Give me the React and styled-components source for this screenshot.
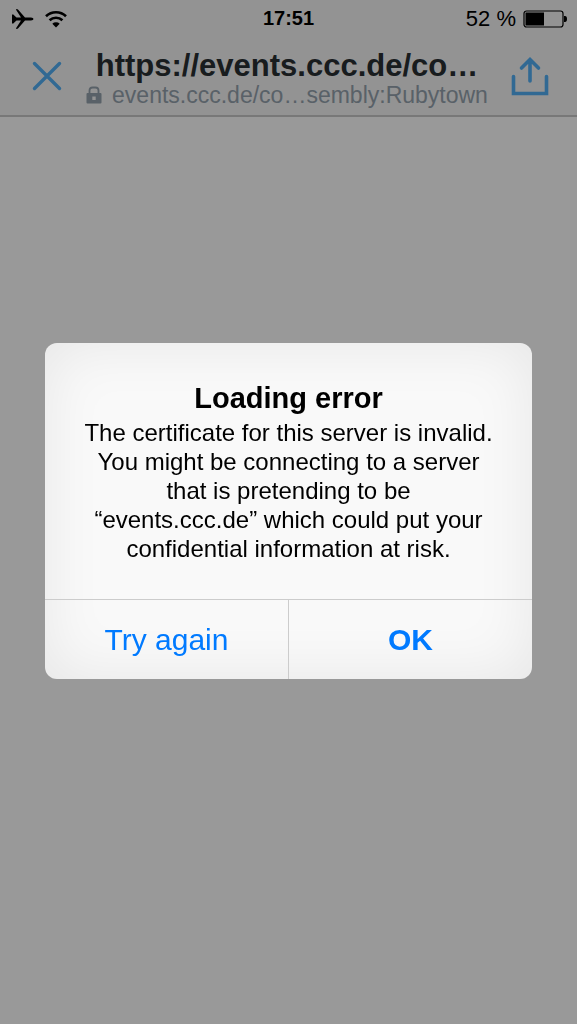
import React, { useState } from 'react';
import styled, { createGlobalStyle } from 'styled-components';


const GlobalStyle = createGlobalStyle`
    * {
        box-sizing: border-box;
    }

    body {
        margin: 0;
        background-color: #ffffff;
        color: #000000;
        font-family: "Liberation Sans", Arial, sans-serif;
    }

    h1, h2, p {
        margin: 0;
    }
`;

const Page = styled.div`
    min-height: 100vh;
`;

const TopBar = styled.header`
    background-color: #f5f5f5;
    border-bottom: 2px solid #c8c8c8;
`;

const StatusBar = styled.div`
    display: grid;
    grid-template-columns: 1fr auto 1fr;
    align-items: center;
    height: 37px;
    padding: 0 10px;
    font-size: 22px;
`;

const StatusGroup = styled.div`
    display: flex;
    align-items: center;
    justify-content: ${props => props.end ? 'flex-end' : 'flex-start'};
    gap: ${props => props.end ? 7 : 11}px;
`;

const Clock = styled.time`
    font-size: 20px;
    font-weight: bold;
`;

const NavBar = styled.nav`
    display: flex;
    align-items: center;
    justify-content: space-between;
    height: 78px;
    padding: 0 27px 0 30px;
`;

const IconButton = styled.button`
    display: flex;
    padding: 0;
    border: none;
    background: none;
    color: #52b0f5;
    cursor: pointer;
`;

const Address = styled.div`
    display: flex;
    flex-direction: column;
    align-items: center;
    padding-top: 6px;
    white-space: nowrap;
`;

const PageTitle = styled.h1`
    color: #292f33;
    font-size: 31px;
    line-height: 32px;
`;

const PageUrl = styled.p`
    display: flex;
    align-items: center;
    gap: 10px;
    color: #94a2ad;
    font-size: 23px;
    line-height: 26px;
`;

const Overlay = styled.div`
    position: fixed;
    inset: 0;
    display: flex;
    align-items: center;
    justify-content: center;
    padding: 0 45px 2px;
    background-color: rgba(0, 0, 0, 0.4);
`;

const Alert = styled.section`
    flex: 1;
    max-width: 540px;
    overflow: hidden;
    border-radius: 12px;
    background-color: #f9f9f9;
    box-shadow: inset 0 0 60px rgba(0, 0, 0, 0.08);
    text-align: center;
`;

const AlertBody = styled.div`
    padding: 37px 38px 36px;
`;

const AlertTitle = styled.h2`
    margin-bottom: 2px;
    font-size: 29px;
    line-height: 36px;
`;

const AlertMessage = styled.p`
    font-size: 24px;
    line-height: 29px;
`;

const AlertActions = styled.div`
    display: flex;
    border-top: 1px solid #cccccc;
`;

const AlertButton = styled.button`
    flex: 1;
    height: 79px;
    padding: 0;
    border: none;
    background: none;
    color: #007aff;
    font-family: inherit;
    font-size: 30px;
    font-weight: ${props => props.primary ? 'bold' : 'normal'};
    cursor: pointer;

    & + & {
        border-left: 1px solid #cccccc;
    }
`;


const PlaneIcon = () => (
    <svg width="24" height="22" viewBox="0 0 24 22" aria-label="Airplane mode">
        <path d="M2 6.500h1.300L6.500 9.500H11L6.200 2q-.5-1 .5-1 .9 0 1.500.8L15 9.500h6q2.500.2 2.500 1.500t-2.500 1.500h-6l-6.800 7.700q-.6.8-1.500.8-1 0-.5-1L11 12.500H6.500L3.300 15.500H2z" />
    </svg>
);

const WifiIcon = () => (
    <svg width="22" height="18" viewBox="0 0 22 18" fill="none" stroke="#000" strokeWidth="2.600" aria-label="Wi-Fi">
        <path d="M1 6.300a14.400 14.400 0 0 1 20 0M4.600 10.300a9.200 9.200 0 0 1 12.800 0" />
        <path d="M7.300 13.700a5.500 5.500 0 0 1 7.400 0L11 17.500z" fill="#000" stroke="none" />
    </svg>
);

const BatteryIcon = () => (
    <svg width="44" height="18" viewBox="0 0 44 18" aria-label="Battery">
        <rect x="1" y="1" width="39" height="16" rx="2.500" fill="none" stroke="#000" strokeWidth="1.200" />
        <path d="M2.500 2.500h18.500v13H2.500zM41 6h1q2 0 2 3t-2 3h-1z" />
    </svg>
);

const CloseIcon = () => (
    <svg width="34" height="34" viewBox="0 0 34 34" stroke="currentColor" strokeWidth="3.400" strokeLinecap="round">
        <path d="M4.500 4.500l25 25M29.500 4.500l-25 25" />
    </svg>
);

const ShareIcon = () => (
    <svg width="40" height="40" viewBox="0 0 40 40" fill="none" stroke="currentColor" strokeWidth="3.600" strokeLinecap="round">
        <path d="M3.500 20.500v17h33v-17M20 25V4M11.500 12L20 3.500l8.500 8.500" />
    </svg>
);

const LockIcon = () => (
    <svg width="16" height="18" viewBox="0 0 16 18" aria-hidden="true">
        <path d="M3.500 8V4.500q0-3 3-3h3q3 0 3 3V8" fill="none" stroke="currentColor" strokeWidth="1.800" />
        <path fillRule="evenodd" fill="currentColor" d="M1.500 7h13q1 0 1 1v8.500q0 1-1 1h-13q-1 0-1-1V8q0-1 1-1zM6.300 10.500v3.400h3.400v-3.400z" />
    </svg>
);


export default function App() {
    const [showAlert, setShowAlert] = useState(true);

    return (
        <Page>
            <GlobalStyle />

            <TopBar>
                <StatusBar>
                    <StatusGroup>
                        <PlaneIcon />
                        <WifiIcon />
                    </StatusGroup>
                    <Clock>17:51</Clock>
                    <StatusGroup end={1}>
                        <span>52 %</span>
                        <BatteryIcon />
                    </StatusGroup>
                </StatusBar>

                <NavBar>
                    <IconButton aria-label="Close" onClick={() => window.history.back()}>
                        <CloseIcon />
                    </IconButton>
                    <Address>
                        <PageTitle>https://events.ccc.de/co…</PageTitle>
                        <PageUrl>
                            <LockIcon />
                            events.ccc.de/co…sembly:Rubytown
                        </PageUrl>
                    </Address>
                    <IconButton aria-label="Share">
                        <ShareIcon />
                    </IconButton>
                </NavBar>
            </TopBar>

            {showAlert && (
                <Overlay>
                    <Alert role="alertdialog" aria-labelledby="alert-title" aria-describedby="alert-message">
                        <AlertBody>
                            <AlertTitle id="alert-title">Loading error</AlertTitle>
                            <AlertMessage id="alert-message">
                                The certificate for this server is invalid. You might be connecting to a server
                                that is pretending to be “events.ccc.de” which could put your confidential
                                information at risk.
                            </AlertMessage>
                        </AlertBody>
                        <AlertActions>
                            <AlertButton onClick={() => window.location.reload()}>Try again</AlertButton>
                            <AlertButton primary={1} onClick={() => setShowAlert(false)}>OK</AlertButton>
                        </AlertActions>
                    </Alert>
                </Overlay>
            )}
        </Page>
    );
}
